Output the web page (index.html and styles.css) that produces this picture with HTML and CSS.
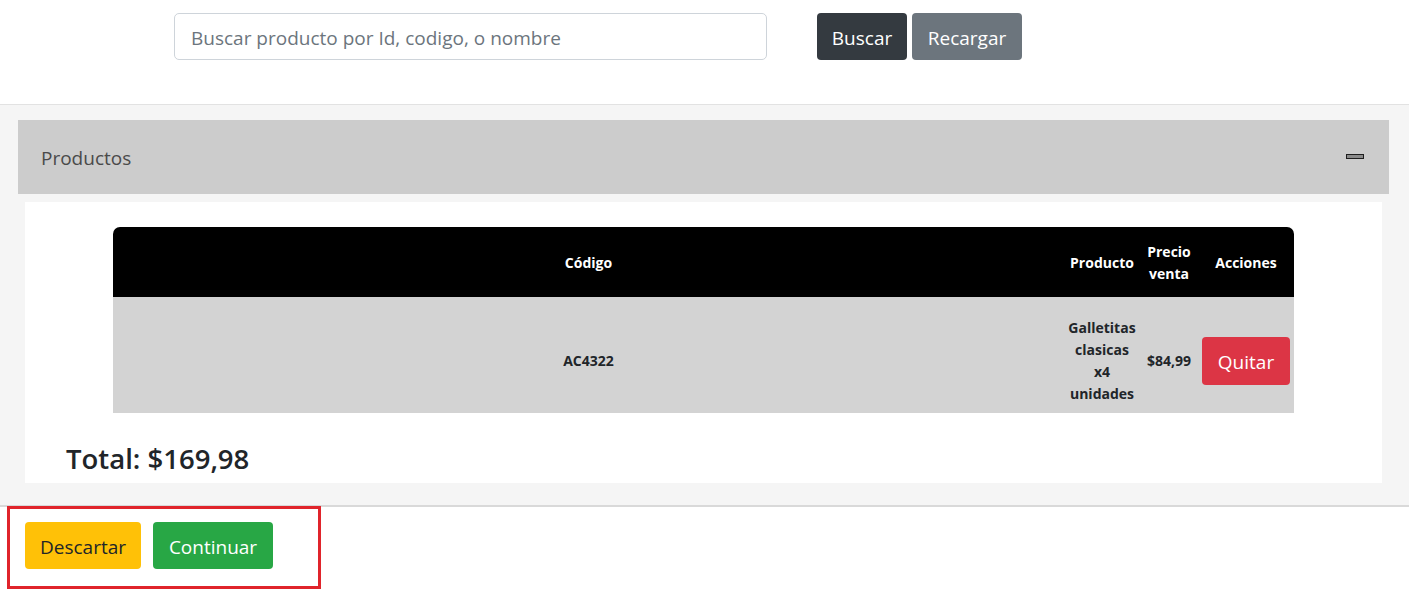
FILE: index.html
```html
<!DOCTYPE html>
<html lang="es">
<head>
<meta charset="utf-8">
<title>Productos</title>
<link rel="stylesheet" href="styles.css">
</head>
<body>
<header class="search-bar">
  <input class="search-input" type="text" placeholder="Buscar producto por Id, codigo, o nombre">
  <button class="btn btn-dark btn-buscar">Buscar</button>
  <button class="btn btn-secondary btn-recargar">Recargar</button>
</header>
<main class="content">
  <div class="card-header">
    <span class="card-title">Productos</span>
    <span class="minimize-icon"></span>
  </div>
  <div class="card-body">
    <table class="products-table">
      <thead>
        <tr>
          <th class="col-code">Código</th>
          <th class="col-product">Producto</th>
          <th class="col-price">Precio venta</th>
          <th class="col-actions">Acciones</th>
        </tr>
      </thead>
      <tbody>
        <tr>
          <td>AC4322</td>
          <td>Galletitas clasicas x4 unidades</td>
          <td>$84,99</td>
          <td><button class="btn btn-danger btn-quitar">Quitar</button></td>
        </tr>
      </tbody>
    </table>
    <h3 class="total">Total: $169,98</h3>
  </div>
</main>
<footer class="actions">
  <button class="btn btn-warning btn-descartar">Descartar</button>
  <button class="btn btn-success btn-continuar">Continuar</button>
  <div class="highlight-box"></div>
</footer>
</body>
</html>
```
FILE: styles.css
```css
* { box-sizing: border-box; }
html, body { margin: 0; padding: 0; background: #fff; }
body {
  font-family: "Open Sans", "Noto Sans", sans-serif;
  color: #212529;
  width: 1409px;
  height: 603px;
  overflow: hidden;
}
.search-bar {
  height: 105px;
  border-bottom: 1px solid #e2e2e2;
  display: flex;
  align-items: flex-start;
  padding: 13px 0 0 174px;
}
.search-input {
  width: 593px;
  height: 47px;
  border: 1px solid #ced4da;
  border-radius: 5px;
  padding: 2px 16px 0;
  font-family: inherit;
  font-size: 19px;
  color: #495057;
  outline: none;
}
.search-input::placeholder { color: #6c757d; }
.btn {
  font-family: inherit;
  font-size: 19px;
  height: 47px;
  border: none;
  border-radius: 4px;
  padding: 2px 0 0;
  text-align: center;
  cursor: pointer;
}
.btn-dark { background: #343a40; color: #fff; }
.btn-secondary { background: #6c757d; color: #fff; }
.btn-danger { background: #dc3545; color: #fff; }
.btn-warning { background: #ffc107; color: #212529; }
.btn-success { background: #28a745; color: #fff; }
.btn-buscar { width: 90px; margin-left: 50px; }
.btn-recargar { width: 110px; margin-left: 5px; }

.content {
  background: #f5f5f5;
  height: 402px;
  padding-top: 15px;
  border-bottom: 2px solid #d9d9d9;
}
.card-header {
  margin: 0 20px 0 18px;
  height: 74px;
  background: #cccccc;
  display: flex;
  align-items: center;
  justify-content: space-between;
  padding: 2px 25px 0 23px;
}
.card-title { font-size: 19px; color: #4a4a4a; }
.minimize-icon {
  width: 18px;
  height: 5px;
  border: 1px solid #1e1e1e;
  background: #8a8a8a;
  margin-top: -4px;
}
.card-body {
  margin: 8px 27px 0 25px;
  height: 281px;
  background: #fff;
  padding: 25px 88px 0 88px;
}
.products-table {
  width: 100%;
  table-layout: fixed;
  border-collapse: separate;
  border-spacing: 0;
  font-size: 14px;
  font-weight: 700;
  line-height: 22px;
  text-align: center;
}
.products-table th {
  background: #000;
  color: #fff;
  padding: 13px 4px 11px;
  height: 70px;
}
.products-table th:first-child { border-top-left-radius: 7px; }
.products-table th:last-child { border-top-right-radius: 7px; }
.products-table td {
  background: #d3d3d3;
  color: #212529;
  padding: 20px 4px 8px;
  height: 116px;
}
.products-table .col-product { width: 76px; }
.products-table .col-price { width: 58px; }
.products-table .col-actions { width: 96px; }
.btn-quitar { width: 88px; height: 48px; font-size: 19px; font-weight: 400; display: block; }
.total {
  margin: 28px 0 0 -47px;
  font-size: 27.5px;
  font-weight: 600;
  line-height: 36px;
}

.actions {
  position: relative;
  padding: 15px 0 0 25px;
  display: flex;
  gap: 12px;
}
.btn-descartar { width: 116px; }
.btn-continuar { width: 120px; }
.highlight-box {
  position: absolute;
  left: 7px;
  top: -1px;
  width: 314px;
  height: 83px;
  border: 3px solid #e0242b;
  pointer-events: none;
}
```
